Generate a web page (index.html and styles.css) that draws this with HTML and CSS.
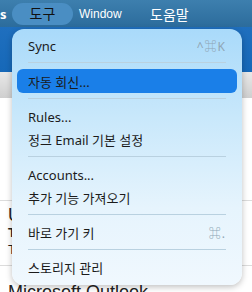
FILE: index.html
```html
<!DOCTYPE html>
<html lang="ko">
<head>
  <meta charset="UTF-8" />
  <title>도구 메뉴</title>
  <link rel="stylesheet" href="styles.css">
</head>
<body>
  <div class="screen">
    <div class="menubar">
      <span class="bar-item cut">s</span>
      <span class="bar-item open">도구</span>
      <span class="bar-item window">Window</span>
      <span class="bar-item help">도움말</span>
    </div>

    <div class="app">
      <div class="toolbar"></div>
      <div class="ribbon"></div>
      <div class="list">
        <div class="mail">
          <div class="from">U</div>
          <div class="subject">Te</div>
          <div class="preview">Te</div>
        </div>
        <div class="mail next">
          <div class="from">Microsoft Outlook</div>
        </div>
      </div>
    </div>

    <div class="menu">
      <div class="item"><span>Sync</span><span class="key">^⌘K</span></div>
      <div class="sep"></div>
      <div class="item active"><span>자동 회신...</span></div>
      <div class="sep"></div>
      <div class="item"><span>Rules...</span></div>
      <div class="item"><span>정크 Email 기본 설정</span></div>
      <div class="sep"></div>
      <div class="item"><span>Accounts...</span></div>
      <div class="item"><span>추가 기능 가져오기</span></div>
      <div class="sep"></div>
      <div class="item"><span>바로 가기 키</span><span class="key">⌘.</span></div>
      <div class="sep"></div>
      <div class="item"><span>스토리지 관리</span></div>
    </div>
  </div>
</body>
</html>
```

FILE: styles.css
```css
body {
  margin: 0;
  font-family: "Noto Sans", "Noto Sans CJK KR", sans-serif;
  background-color: #ffffff;
}

.screen {
  position: relative;
  width: 252px;
  height: 292px;
  overflow: hidden;
}

.menubar {
  height: 27px;
  display: flex;
  align-items: center;
  background: linear-gradient(180deg, #3d7fae, #2c6c9c);
  color: #ffffff;
  font-size: 13px;
}

.bar-item {
  white-space: nowrap;
}

.cut {
  width: 12px;
  font-weight: bold;
}

.open {
  width: 61px;
  height: 22px;
  line-height: 22px;
  border-radius: 11px;
  background-color: #4a8ec3;
  color: #111111;
  text-align: center;
  font-size: 14px;
  margin-right: 6px;
}

.window {
  font-family: "Liberation Sans", sans-serif;
  font-size: 12px;
  width: 71px;
}

.help {
  font-size: 14px;
}

.toolbar {
  height: 45px;
  background: linear-gradient(180deg, #1f6fbe, #1668b8);
}

.ribbon {
  height: 26px;
  background: linear-gradient(180deg, #e8e8e8, #cfcfcf);
}

.list {
  padding-top: 102px;
}

.mail {
  border-top: 1px solid #dcdcdc;
  padding: 4px 0 0 8px;
  font-family: "Liberation Sans", sans-serif;
  color: #222222;
}

.mail.next {
  padding-top: 16px;
}

.from {
  font-size: 18px;
  line-height: 20px;
}

.subject {
  font-size: 13px;
  font-weight: bold;
  line-height: 16px;
}

.preview {
  font-size: 13px;
  line-height: 18px;
  padding-bottom: 6px;
}

.menu {
  position: absolute;
  left: 12px;
  top: 29px;
  width: 230px;
  padding: 5px 0 6px;
  border-radius: 12px;
  background: linear-gradient(180deg, #a9dafa 0%, #c9e8fb 35%, #e6f4fd 70%, #f0f8fe 100%);
  box-shadow: 0 2px 6px rgba(0, 0, 0, 0.25);
  font-size: 13px;
  color: #1b1b1b;
}

.item {
  height: 23px;
  margin: 0 5px;
  padding: 0 11px;
  display: flex;
  align-items: center;
  justify-content: space-between;
  border-radius: 6px;
}

.item.active {
  height: 24px;
  background-color: #1a7fe8;
}

.key {
  color: #8fa6b5;
  font-size: 12px;
  letter-spacing: 1px;
}

.sep {
  height: 1px;
  margin: 5px 16px 6px;
  background-color: #b9d1e0;
}
```
